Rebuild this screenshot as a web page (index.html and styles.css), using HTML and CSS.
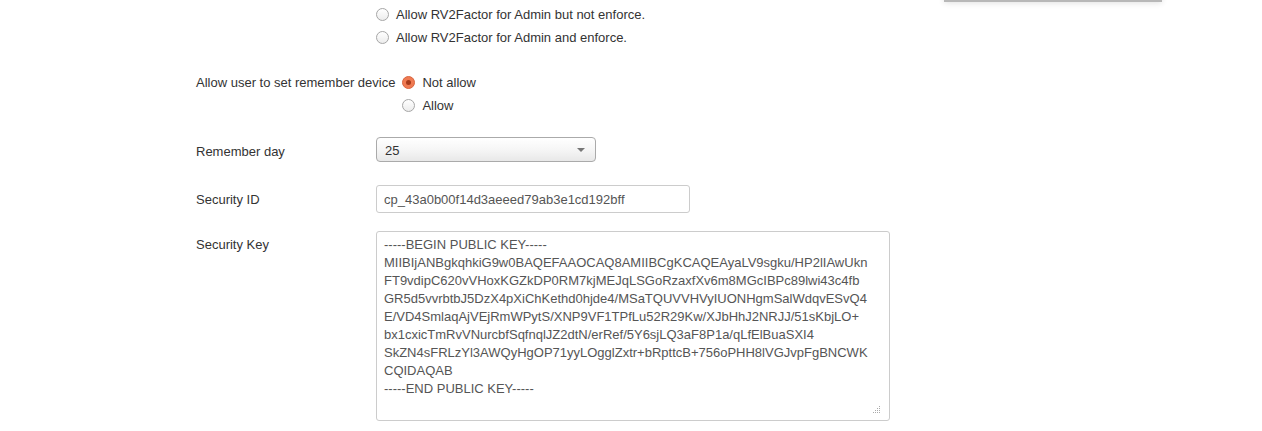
FILE: index.html
```html
<!DOCTYPE html>
<html>
<head>
<meta charset="utf-8">
<link rel="stylesheet" href="styles.css">
</head>
<body>
<div class="topmenu"></div>
<form class="form">
  <div class="row row-first">
    <div class="label"></div>
    <div class="options">
      <label class="opt"><input type="radio" name="admin"><span>Allow RV2Factor for Admin but not enforce.</span></label>
      <label class="opt"><input type="radio" name="admin"><span>Allow RV2Factor for Admin and enforce.</span></label>
    </div>
  </div>
  <div class="row row-remember">
    <div class="label label-auto">Allow user to set remember device</div>
    <div class="options options-inline">
      <label class="opt"><input type="radio" name="remember" checked><span>Not allow</span></label>
      <label class="opt"><input type="radio" name="remember"><span>Allow</span></label>
    </div>
  </div>
  <div class="row row-select">
    <div class="label label-low">Remember day</div>
    <div class="select">
      <span class="select-value">25</span>
      <span class="caret"></span>
    </div>
  </div>
  <div class="row row-input">
    <div class="label">Security ID</div>
    <input class="text" type="text" value="cp_43a0b00f14d3aeeed79ab3e1cd192bff">
  </div>
  <div class="row row-key">
    <div class="label label-top">Security Key</div>
    <div class="key-wrap">
      <textarea class="key" wrap="off">-----BEGIN PUBLIC KEY-----
MIIBIjANBgkqhkiG9w0BAQEFAAOCAQ8AMIIBCgKCAQEAyaLV9sgku/HP2lIAwUkn
FT9vdipC620vVHoxKGZkDP0RM7kjMEJqLSGoRzaxfXv6m8MGcIBPc89lwi43c4fb
GR5d5vvrbtbJ5DzX4pXiChKethd0hjde4/MSaTQUVVHVyIUONHgmSalWdqvESvQ4
E/VD4SmlaqAjVEjRmWPytS/XNP9VF1TPfLu52R29Kw/XJbHhJ2NRJJ/51sKbjLO+
bx1cxicTmRvVNurcbfSqfnqlJZ2dtN/erRef/5Y6sjLQ3aF8P1a/qLfElBuaSXI4
SkZN4sFRLzYl3AWQyHgOP71yyLOgglZxtr+bRpttcB+756oPHH8lVGJvpFgBNCWK
CQIDAQAB
-----END PUBLIC KEY-----</textarea>
      <svg class="grip" width="8" height="8" viewBox="0 0 8 8">
        <rect x="6" y="0" width="1" height="1" fill="#aaa"/>
        <rect x="4" y="2" width="1" height="1" fill="#aaa"/>
        <rect x="6" y="2" width="1" height="1" fill="#aaa"/>
        <rect x="2" y="4" width="1" height="1" fill="#aaa"/>
        <rect x="4" y="4" width="1" height="1" fill="#aaa"/>
        <rect x="6" y="4" width="1" height="1" fill="#aaa"/>
        <rect x="0" y="6" width="1" height="1" fill="#aaa"/>
        <rect x="2" y="6" width="1" height="1" fill="#aaa"/>
        <rect x="4" y="6" width="1" height="1" fill="#aaa"/>
        <rect x="6" y="6" width="1" height="1" fill="#aaa"/>
      </svg>
    </div>
  </div>
</form>
</body>
</html>
```

FILE: styles.css
```css
html, body {
  margin: 0;
  padding: 0;
  background: #ffffff;
}
body {
  font-family: "Liberation Sans", Arial, sans-serif;
  font-size: 13px;
  color: #333333;
  position: relative;
  height: 431px;
  overflow: hidden;
}
.topmenu {
  position: absolute;
  left: 944px;
  top: -20px;
  width: 218px;
  height: 20px;
  background: #ffffff;
  border-bottom: 2px solid #b8b8b8;
  box-shadow: 0 1px 6px rgba(0, 0, 0, 0.12);
}
.form {
  display: flex;
  flex-direction: column;
  padding-left: 196px;
}
.row {
  display: flex;
  align-items: center;
}
.label {
  width: 180px;
  flex: none;
  line-height: 23px;
}
.label-auto {
  width: auto;
  margin-right: 7px;
}
.label-low {
  line-height: 18px;
  padding-top: 6px;
}
.label-top {
  align-self: flex-start;
  line-height: 18px;
  padding-top: 5px;
}
.row-first {
  margin-top: 3px;
  align-items: flex-start;
}
.row-remember {
  margin-top: 22px;
  align-items: flex-start;
}
.row-select {
  margin-top: 20px;
  align-items: flex-start;
}
.row-input {
  margin-top: 23px;
}
.row-key {
  margin-top: 18px;
}
.options {
  display: flex;
  flex-direction: column;
}
.opt {
  display: flex;
  align-items: center;
  height: 23px;
}
.opt input {
  appearance: none;
  -webkit-appearance: none;
  width: 13px;
  height: 13px;
  margin: 0 7px 0 0;
  border: 1px solid #a6a6a6;
  border-radius: 50%;
  background: linear-gradient(#ffffff, #ececec);
  box-sizing: border-box;
  position: relative;
  flex: none;
}
.opt input:checked {
  background: #ef7a52;
  border-color: #d9653f;
}
.opt input:checked::after {
  content: "";
  position: absolute;
  left: 3px;
  top: 3px;
  width: 5px;
  height: 5px;
  border-radius: 50%;
  background: #a63a1a;
}
.select {
  width: 220px;
  height: 25px;
  box-sizing: border-box;
  border: 1px solid #aaaaaa;
  border-radius: 4px;
  background: linear-gradient(#ffffff 0%, #f6f6f6 50%, #e8e8e8 100%);
  display: flex;
  align-items: center;
  justify-content: space-between;
  padding: 1px 10px 0 8px;
  color: #333333;
}
.caret {
  width: 0;
  height: 0;
  border-left: 4px solid transparent;
  border-right: 4px solid transparent;
  border-top: 4px solid #777777;
}
.text {
  width: 314px;
  height: 28px;
  box-sizing: border-box;
  border: 1px solid #cccccc;
  border-radius: 3px;
  padding: 0 7px;
  font-family: "Liberation Sans", Arial, sans-serif;
  font-size: 13px;
  color: #555555;
  margin: 0;
  outline: none;
}
.key-wrap {
  position: relative;
  display: flex;
}
.key {
  width: 514px;
  height: 190px;
  box-sizing: border-box;
  border: 1px solid #cccccc;
  border-radius: 3px;
  padding: 4px 7px;
  font-family: "Liberation Sans", Arial, sans-serif;
  font-size: 13px;
  line-height: 18px;
  color: #555555;
  margin: 0;
  overflow: hidden;
  white-space: pre;
  resize: none;
  outline: none;
}
.grip {
  position: absolute;
  right: 9px;
  bottom: 7px;
}
```
